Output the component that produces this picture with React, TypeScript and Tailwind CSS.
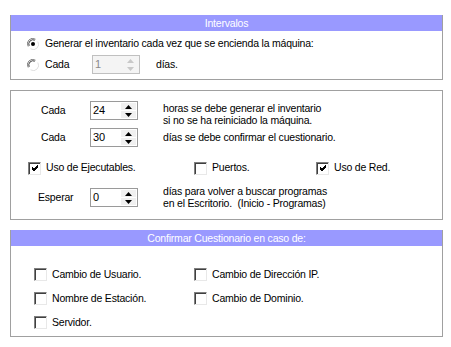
import React from 'react';

const Header = ({ title }: { title: string }) => (
  <div className="h-[16px] bg-[#9999ff] text-white text-center leading-[16px]">{title}</div>
);

const Radio = ({ checked }: { checked?: boolean }) => (
  <svg width="12" height="12" viewBox="0 0 12 12" className="shrink-0">
    <circle cx="6" cy="6" r="5.5" fill="#ffffff" />
    <path d="M1.2 8.5 A5.3 5.3 0 0 1 8.5 1.2" stroke="#808080" strokeWidth="1" fill="none" />
    <path d="M2.2 7.8 A4.2 4.2 0 0 1 7.8 2.2" stroke="#404040" strokeWidth="1" fill="none" />
    <path d="M3.5 10.8 A5.3 5.3 0 0 0 10.8 3.5" stroke="#e0e0e0" strokeWidth="1" fill="none" />
    {checked && <circle cx="6" cy="6" r="2" fill="#000000" />}
  </svg>
);

const Check = ({ checked }: { checked?: boolean }) => (
  <div className="w-[13px] h-[13px] shrink-0 border-t border-l border-[#808080] border-b border-r border-b-[#e8e8e8] border-r-[#e8e8e8] bg-white">
    <div className="w-full h-full border-t border-l border-[#404040] border-b-0 border-r-0 flex items-center justify-center">
      {checked && (
        <svg width="9" height="9" viewBox="0 0 9 9">
          <path d="M1 4 L3 6 L7 2 M1 5 L3 7 L7 3 M1 3 L3 5 L7 1" stroke="#000" strokeWidth="1" fill="none" />
        </svg>
      )}
    </div>
  </div>
);

const Spin = ({ value, disabled }: { value: string; disabled?: boolean }) => (
  <div
    className={`w-[48px] h-[19px] flex border ${
      disabled ? 'bg-[#f4f4f4] border-[#c0c0c0] text-[#8a8a8a]' : 'bg-white border-[#9a9a9a] text-black'
    }`}
  >
    <div className="flex-1 pl-[2px] leading-[16px] text-[11px]">{value}</div>
    <div className="w-[16px] flex flex-col py-[1px] pr-[1px] gap-[1px]">
      <div className={`flex-1 flex items-center justify-center ${disabled ? '' : 'bg-[#f0f0f0]'}`}>
        <svg width="7" height="4" viewBox="0 0 7 4">
          <path d="M3.5 0 L7 4 L0 4 Z" fill={disabled ? '#c8c8c8' : '#000'} />
        </svg>
      </div>
      <div className={`flex-1 flex items-center justify-center ${disabled ? '' : 'bg-[#f0f0f0]'}`}>
        <svg width="7" height="4" viewBox="0 0 7 4">
          <path d="M0 0 L7 0 L3.5 4 Z" fill={disabled ? '#c8c8c8' : '#000'} />
        </svg>
      </div>
    </div>
  </div>
);

const CheckItem = ({ label, checked, w }: { label: string; checked?: boolean; w: string }) => (
  <div className={`flex items-center gap-[5px] ${w}`}>
    <Check checked={checked} />
    <span>{label}</span>
  </div>
);

export default function App() {
  return (
    <div
      className="w-[451px] h-[347px] bg-white text-black text-[10.5px] tracking-[-0.2px] pt-[15px] pl-[10px] flex flex-col gap-[10px]"
      style={{ fontFamily: '"Liberation Sans", Arial, sans-serif' }}
    >
      {/* Intervalos */}
      <div className="w-[433px] h-[65px] border-x border-b border-[#a0a0a0] flex flex-col">
        <Header title="Intervalos" />
        <div className="flex flex-col pl-[16px] pt-[6px]">
          <div className="flex items-center gap-[6px] h-[14px]">
            <Radio checked />
            <span>Generar el inventario cada vez que se encienda la máquina:</span>
          </div>
          <div className="flex items-center h-[19px] mt-[4px]">
            <Radio />
            <span className="ml-[6px] w-[47px]">Cada</span>
            <Spin value="1" disabled />
            <span className="ml-[16px]">días.</span>
          </div>
        </div>
      </div>

      {/* Opciones */}
      <div className="w-[433px] h-[130px] border border-[#a0a0a0] flex flex-col pt-[10px]">
        <div className="flex items-start h-[19px]">
          <span className="w-[79px] pl-[30px] leading-[19px]">Cada</span>
          <Spin value="24" />
          <div className="ml-[25px] leading-[12px] pt-[1px]">
            <div>horas se debe generar el inventario</div>
            <div>si no se ha reiniciado la máquina.</div>
          </div>
        </div>
        <div className="flex items-center h-[19px] mt-[8px]">
          <span className="w-[79px] pl-[30px]">Cada</span>
          <Spin value="30" />
          <span className="ml-[25px]">días se debe confirmar el cuestionario.</span>
        </div>
        <div className="flex items-center h-[14px] mt-[14px] pl-[17px]">
          <CheckItem label="Uso de Ejecutables." checked w="w-[166px]" />
          <CheckItem label="Puertos." w="w-[122px]" />
          <CheckItem label="Uso de Red." checked w="w-[100px]" />
        </div>
        <div className="flex items-start h-[19px] mt-[13px]">
          <span className="w-[79px] pl-[27px] leading-[19px]">Esperar</span>
          <Spin value="0" />
          <div className="ml-[25px] leading-[12px] -mt-[3px]">
            <div>días para volver a buscar programas</div>
            <div>en el Escritorio.&nbsp; (Inicio - Programas)</div>
          </div>
        </div>
      </div>

      {/* Confirmar */}
      <div className="w-[433px] h-[107px] border-x border-b border-[#a0a0a0] flex flex-col">
        <Header title="Confirmar Cuestionario en caso de:" />
        <div className="flex flex-col pl-[23px] pt-[22px] gap-[10px]">
          <div className="flex items-center h-[13px]">
            <CheckItem label="Cambio de Usuario." w="w-[160px]" />
            <CheckItem label="Cambio de Dirección IP." w="w-[200px]" />
          </div>
          <div className="flex items-center h-[13px] mt-[1px]">
            <CheckItem label="Nombre de Estación." w="w-[160px]" />
            <CheckItem label="Cambio de Dominio." w="w-[200px]" />
          </div>
          <div className="flex items-center h-[13px] mt-[1px]">
            <CheckItem label="Servidor." w="w-[160px]" />
          </div>
        </div>
      </div>
    </div>
  );
}
